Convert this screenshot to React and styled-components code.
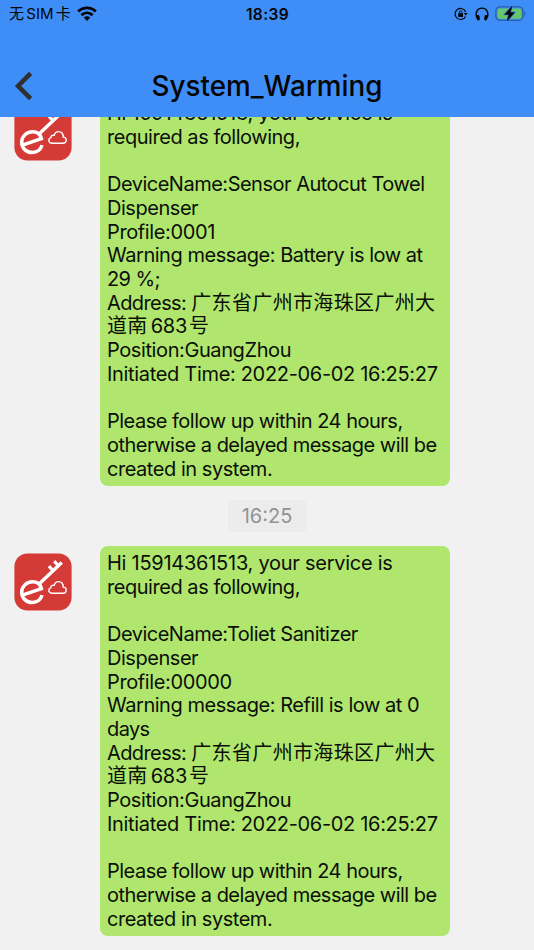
import React from 'react';
import styled, { createGlobalStyle } from 'styled-components';

const GlobalStyle = createGlobalStyle`
  * {
    box-sizing: border-box;
  }

  body {
    margin: 0;
    background: #f1f1f1;
    font-family: Inter, 'Noto Sans CJK SC', sans-serif;
    color: #0b0f08;
  }
`;

const Screen = styled.div`
  width: 534px;
  height: 950px;
  display: flex;
  flex-direction: column;
  overflow: hidden;
  background: #f1f1f1;
`;

const Header = styled.header`
  flex: none;
  height: 117px;
  background: #3f8ef7;
  color: #050505;
`;

const StatusBar = styled.div`
  display: grid;
  grid-template-columns: 1fr auto 1fr;
  align-items: center;
  height: 28px;
  padding: 0 8px 0 9px;
`;

const Carrier = styled.div`
  display: flex;
  align-items: center;
  gap: 2.3px;
  font-size: 15px;
  line-height: 28px;

  svg {
    margin-left: 4px;
    margin-top: -2px;
  }
`;

const Clock = styled.div`
  font-size: 15.5px;
  font-weight: 600;
  letter-spacing: 0.4px;
`;

const StatusIcons = styled.div`
  display: flex;
  align-items: center;
  justify-content: flex-end;
  gap: 6.5px;
`;

const NavBar = styled.div`
  display: grid;
  grid-template-columns: 60px 1fr 60px;
  align-items: center;
  height: 89px;
  padding-top: 27px;
`;

const BackButton = styled.button`
  display: flex;
  padding: 0 0 0 14px;
  border: 0;
  background: none;
`;

const Title = styled.h1`
  margin: 0;
  font-size: 27.8px;
  font-weight: 500;
  line-height: 32px;
  text-align: center;
  white-space: nowrap;
`;

const Chat = styled.main`
  flex: 1;
  min-height: 0;
  display: flex;
  flex-direction: column;
  overflow: hidden;
`;

const Message = styled.div`
  flex: none;
  display: flex;
  align-items: flex-start;
  gap: 28px;
  padding-left: 14px;
  margin-top: ${props => props.$offset || 0}px;
`;

const Avatar = styled.div`
  width: 58px;
  height: 58px;
  margin-top: 7px;

  svg {
    display: block;
  }
`;

const Bubble = styled.div`
  width: 350px;
  height: 390px;
  padding: 6px 7px 4px;
  border-radius: 8px;
  background: #b0e66e;
`;

const Line = styled.div`
  height: 23.73px;
  font-size: 20px;
  line-height: 23.73px;
  letter-spacing: ${props => props.$spacing || -0.46}px;
  white-space: pre;
`;

const Han = styled.span`
  letter-spacing: 0.35px;
`;

const HouseNumber = styled.span`
  margin: 0 2px 0 3px;
  letter-spacing: -0.25px;
`;

const TimeChip = styled.div`
  flex: none;
  align-self: center;
  width: 78px;
  height: 32px;
  margin: 14px 0;
  border-radius: 4px;
  background: #ececec;
  color: #929292;
  font-size: 20px;
  line-height: 33px;
  text-align: center;
`;

const WifiIcon = () => (
  <svg width="20" height="15" viewBox="0 0 20 15" fill="none" stroke="#050505" strokeWidth="2.8">
    <path d="M1.2 5.5C6.2 .7 13.8 .7 18.8 5.5" />
    <path d="M4.4 9.1C7.7 6.1 12.3 6.1 15.6 9.1" />
    <path d="M6.8 11.6C8.7 9.9 11.3 9.9 13.2 11.6L10 14.9Z" fill="#050505" stroke="none" />
  </svg>
);

const LockIcon = () => (
  <svg width="14" height="14" viewBox="0 0 14 14" fill="none" stroke="#050505">
    <path d="M11.5 9.4A5.5 5.5 0 1 1 11.7 5" strokeWidth="1.2" />
    <path d="M9.6 5.9H13.8L11.7 8.6Z" fill="#050505" stroke="none" />
    <rect x="4.2" y="6.3" width="4.8" height="3.7" rx=".6" fill="#050505" stroke="none" />
    <path d="M5.3 6.5V5.2A1.3 1.3 0 0 1 7.9 5.2V6.5" strokeWidth="1" />
  </svg>
);

const HeadphonesIcon = () => (
  <svg width="14" height="14" viewBox="0 0 14 14" fill="none" stroke="#050505">
    <path d="M1.8 10.8C-.1 5.2 2.5 1.1 7 1.1S14.1 5.2 12.2 10.8" strokeWidth="1.4" />
    <rect x="1.6" y="8" width="3.1" height="5.4" rx="1.3" transform="rotate(-10 3 11)" fill="#050505" stroke="none" />
    <rect x="9.3" y="8" width="3.1" height="5.4" rx="1.3" transform="rotate(10 11 11)" fill="#050505" stroke="none" />
  </svg>
);

const BatteryIcon = () => (
  <svg width="31" height="16" viewBox="0 0 31 16">
    <rect x=".9" y=".9" width="27" height="13.4" rx="4" fill="none" stroke="#2861a8" strokeWidth="1.3" />
    <path d="M29.2 5.2C31 6 31 9.2 29.2 10Z" fill="#2861a8" />
    <rect x="2.5" y="2.5" width="23.8" height="10.2" rx="2.5" fill="#65c767" />
    <path d="M17 .2L9.6 8.4H13.9L12.1 14.9L19.6 6.5H15.2Z" fill="#3f8ef7" stroke="#3f8ef7" strokeWidth="1.8" />
    <path d="M17 .2L9.6 8.4H13.9L12.1 14.9L19.6 6.5H15.2Z" fill="#050505" stroke="#050505" strokeWidth=".5" />
  </svg>
);

const BackIcon = () => (
  <svg width="20" height="30" viewBox="0 0 20 30" fill="none" stroke="#303030" strokeWidth="4.6">
    <path d="M16.6 2.4L4.1 15L16.6 27.6" />
  </svg>
);

const KeyLogo = () => (
  <svg width="58" height="58" viewBox="0 0 58 58" fill="none" stroke="#fff">
    <rect x=".4" y=".4" width="57.2" height="57.2" rx="13" fill="#d43a36" stroke="none" />
    <path d="M8.4 42.2L27.4 35.6C26.2 30.9 22.5 28.8 18.4 28.8C12.4 28.8 7.7 33.5 7.7 39.3C7.7 45.2 12.4 49.5 18.2 49.5C23.3 49.5 27 46.4 28 42.2" strokeWidth="3.5" />
    <path d="M24.8 31.2L47.8 9.4" strokeWidth="3.4" />
    <path d="M44.6 13L40.2 8.2M39.3 18L34.9 13.2" strokeWidth="3.2" />
    <path d="M38.8 40.2H48.8C51.2 40.2 52.2 38.8 52.2 37C52.2 35.1 50.8 34 49.2 34.1C49.4 30.6 47.3 28.6 44.7 28.6C42.2 28.6 40.7 30.1 40.2 32.3C37.8 31.9 36.7 33.2 36.9 34.7C35.4 35.2 34.8 36.2 34.8 37.3C34.8 39.2 36.3 40.2 38.8 40.2Z" strokeWidth="1.4" />
  </svg>
);

const messages = [
  {
    phone: '15914361513',
    device: 'Sensor Autocut Towel',
    profile: '0001',
    warning: ['Battery is low at', '29 %;'],
  },
  {
    phone: '15914361513',
    device: 'Toliet Sanitizer',
    profile: '00000',
    warning: ['Refill is low at 0', 'days'],
  },
];

const ServiceMessage = ({ phone, device, profile, warning, offset }) => (
  <Message $offset={offset}>
    <Avatar><KeyLogo /></Avatar>
    <Bubble>
      <Line $spacing={-0.26}>Hi {phone}, your service is</Line>
      <Line>required as following,</Line>
      <Line />
      <Line $spacing={-0.5}>DeviceName:{device}</Line>
      <Line>Dispenser</Line>
      <Line $spacing={-0.38}>Profile:{profile}</Line>
      <Line>Warning message: {warning[0]}</Line>
      <Line $spacing={-0.6}>{warning[1]}</Line>
      <Line $spacing={-0.6}>Address: <Han>广东省广州市海珠区广州大</Han></Line>
      <Line><Han>道南</Han><HouseNumber>683</HouseNumber><Han>号</Han></Line>
      <Line $spacing={-0.4}>Position:GuangZhou</Line>
      <Line $spacing={-0.32}>Initiated Time: 2022-06-02 16:25:27</Line>
      <Line />
      <Line $spacing={-0.5}>Please follow up within 24 hours,</Line>
      <Line $spacing={-0.5}>otherwise a delayed message will be</Line>
      <Line>created in system.</Line>
    </Bubble>
  </Message>
);

const App = () => {
  return (
    <>
      <GlobalStyle />
      <Screen>
        <Header>
          <StatusBar>
            <Carrier>
              <span>无</span>
              <span>SIM</span>
              <span>卡</span>
              <WifiIcon />
            </Carrier>
            <Clock>18:39</Clock>
            <StatusIcons>
              <LockIcon />
              <HeadphonesIcon />
              <BatteryIcon />
            </StatusIcons>
          </StatusBar>
          <NavBar>
            <BackButton aria-label="Back"><BackIcon /></BackButton>
            <Title>System_Warming</Title>
          </NavBar>
        </Header>
        <Chat>
          <ServiceMessage {...messages[0]} offset={-21} />
          <TimeChip>16:25</TimeChip>
          <ServiceMessage {...messages[1]} />
        </Chat>
      </Screen>
    </>
  );
};

export default App;
